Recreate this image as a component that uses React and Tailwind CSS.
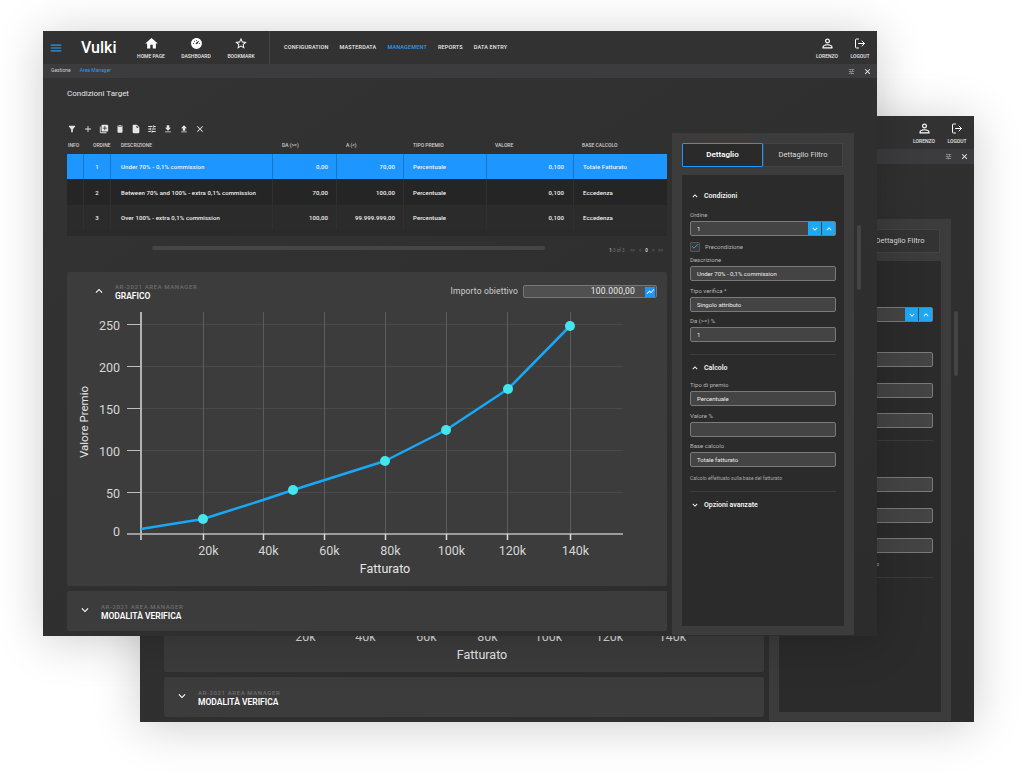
import {
  MdMenu, MdHome, MdStarBorder, MdFilterAlt, MdAdd, MdLibraryAdd, MdDelete, MdInsertDriveFile,
  MdTune, MdFileDownload, MdFileUpload, MdClose, MdPersonOutline, MdShowChart, MdKeyboardArrowUp,
  MdKeyboardArrowDown,
} from 'react-icons/md';
import { RiDashboard3Fill } from 'react-icons/ri';
import { LuLogOut, LuCheck } from 'react-icons/lu';

const NAV = ['CONFIGURATION', 'MASTERDATA', 'MANAGEMENT', 'REPORTS', 'DATA ENTRY'];

const ROWS = [
  { n: '1', desc: 'Under 70% - 0,1% commission', da: '0,00', a: '70,00', val: '0,100', base: 'Totale Fatturato', on: true },
  { n: '2', desc: 'Between 70% and 100% - extra 0,1% commission', da: '70,00', a: '100,00', val: '0,100', base: 'Eccedenza', bg: 'bg-[#252525]' },
  { n: '3', desc: 'Over 100% - extra 0,1% commission', da: '100,00', a: '99.999.999,00', val: '0,100', base: 'Eccedenza', bg: 'bg-[#2b2b2b]' },
];

const POINTS = [[203, 519], [293, 490], [385, 461], [446, 430], [508, 389], [570, 326]];
const Y_TICKS = [[324.5, '250'], [366.5, '200'], [408.5, '150'], [450.5, '100'], [492.5, '50']];
const X_TICKS = [[203.5, '20k'], [263.5, '40k'], [324.5, '60k'], [385.5, '80k'], [446.5, '100k'], [507.5, '120k'], [570.5, '140k']];

function TopIcon({ icon: Icon, label, size = 15 }) {
  return (
    <div className="flex w-[28px] flex-col items-center">
      <Icon size={size} className="h-[15px] text-white" />
      <span className="mt-[2px] text-[5px] leading-[7px] font-medium whitespace-nowrap text-[#e8e8e8]">{label}</span>
    </div>
  );
}

function Header() {
  return (
    <div className="flex h-[33px] shrink-0 items-center bg-[#323232]">
      <MdMenu size={14} className="ml-[6px] text-[#2f9bf0]" />
      <span className="ml-[18px] w-[56px] text-[16px] leading-none font-medium text-white">Vulki</span>
      <div className="flex gap-[17px]">
        <TopIcon icon={MdHome} label="HOME PAGE" />
        <TopIcon icon={RiDashboard3Fill} label="DASHBOARD" size={13} />
        <TopIcon icon={MdStarBorder} label="BOOKMARK" size={14} />
      </div>
      <div className="ml-[14px] h-full w-px bg-[#444]" />
      <div className="ml-[14px] flex gap-[11px] text-[5.5px] font-medium tracking-[0.15px] text-[#e8e8e8]">
        {NAV.map((n) => (
          <span key={n} className={n === 'MANAGEMENT' ? 'text-[#2f9bf0]' : ''}>{n}</span>
        ))}
      </div>
      <div className="mr-[3px] ml-auto flex gap-[5px]">
        <TopIcon icon={MdPersonOutline} label="LORENZO" />
        <TopIcon icon={LuLogOut} label="LOGOUT" size={12} />
      </div>
    </div>
  );
}

function Toolbar() {
  const icons = [MdFilterAlt, MdAdd, MdLibraryAdd, MdDelete, MdInsertDriveFile, MdTune, MdFileDownload, MdFileUpload, MdClose];
  return (
    <div className="mt-[24px] flex h-[10px] items-center gap-[6px] text-[#e6e6e6]">
      {icons.map((Icon, i) => (
        <Icon key={i} size={10} />
      ))}
    </div>
  );
}

function Table() {
  const head = 'text-[5px] font-medium text-[#d0d0d0] whitespace-nowrap';
  return (
    <div>
      <div className={`mt-[4px] flex h-[16px] items-center ${head}`}>
        <span className="w-[17px] pl-[1px]">INFO</span>
        <span className="w-[27px] pl-[9px]">ORDINE</span>
        <span className="w-[162px] pl-[10px]">DESCRIZIONE</span>
        <span className="w-[64px] pl-[9px]">DA (>=)</span>
        <span className="w-[67px] pl-[9px]">A (&lt;)</span>
        <span className="w-[83px] pl-[9px]">TIPO PREMIO</span>
        <span className="w-[87px] pl-[8px]">VALORE</span>
        <span className="w-[93px] pl-[8px]">BASE CALCOLO</span>
      </div>
      {ROWS.map((r) => {
        const line = r.on ? 'border-r border-[#1677c9]' : 'border-r border-[#303030]';
        return (
          <div
            key={r.n}
            className={`flex h-[25.4px] items-stretch text-[6px] font-medium tracking-[0.1px] text-[#f2f2f2] ${r.on ? 'bg-[#1e96ff]' : r.bg}`}
          >
            <span className={`w-[17px] ${line}`} />
            <span className={`flex w-[27px] items-center justify-center ${line}`}>{r.n}</span>
            <span className={`flex w-[162px] items-center pl-[10px] whitespace-nowrap ${line}`}>{r.desc}</span>
            <span className={`flex w-[64px] items-center justify-end pr-[8px] ${line}`}>{r.da}</span>
            <span className={`flex w-[67px] items-center justify-end pr-[8px] ${line}`}>{r.a}</span>
            <span className={`flex w-[83px] items-center pl-[9px] ${line}`}>Percentuale</span>
            <span className={`flex w-[87px] items-center justify-end pr-[9px] ${line}`}>{r.val}</span>
            <span className="flex w-[93px] items-center pl-[9px]">{r.base}</span>
          </div>
        );
      })}
      <div className="h-[6px] bg-[#2a2a2a]" />
      <div className="flex h-[36px] items-start">
        <div className="mt-[10px] ml-[85px] h-[4px] w-[393px] rounded-full bg-[#454545]" />
        <div className="mt-[12px] mr-[4px] ml-auto flex gap-[4px] text-[4.5px] whitespace-nowrap text-[#777]">
          <span className="mr-[2px]"><b className="text-[#aaa]">1</b>-3 of 3</span>
          <span>&lt;&lt;</span>
          <span>&lt;</span>
          <b className="text-[#ccc]">0</b>
          <span>&gt;</span>
          <span>&gt;&gt;</span>
        </div>
      </div>
    </div>
  );
}

function Chart() {
  const line = [[141, 529], POINTS[0], [263, 500], ...POINTS.slice(1)];
  return (
    <svg viewBox="67 306 600 280" className="block h-[280px] w-[600px]" style={{ fontFamily: 'Roboto, sans-serif' }}>
      {Y_TICKS.map(([y]) => (
        <line key={y} x1="141" x2="623" y1={y} y2={y} stroke="#4a4a4a" strokeWidth="1" />
      ))}
      {X_TICKS.map(([x]) => (
        <line key={x} x1={x} x2={x} y1="312" y2="534" stroke="#5e5a5a" strokeWidth="1" />
      ))}
      <line x1="141" x2="141" y1="312" y2="540" stroke="#d8d8d8" strokeWidth="1.5" />
      <line x1="127" x2="623" y1="534" y2="534" stroke="#bdbdbd" strokeWidth="1.5" />
      {Y_TICKS.map(([y]) => (
        <line key={y} x1="127" x2="141" y1={y} y2={y} stroke="#bdbdbd" strokeWidth="1" />
      ))}
      {X_TICKS.map(([x]) => (
        <line key={x} x1={x} x2={x} y1="534" y2="540" stroke="#d8d8d8" strokeWidth="1.5" />
      ))}
      {Y_TICKS.map(([y, t]) => (
        <text key={t} x="120" y={y + 5.5} textAnchor="end" fontSize="12.5" fill="#d6d6d6">{t}</text>
      ))}
      <text x="120" y="535.5" textAnchor="end" fontSize="12.5" fill="#d6d6d6">0</text>
      {X_TICKS.map(([x, t]) => (
        <text key={t} x={x + 5} y="555" textAnchor="middle" fontSize="12.5" fill="#d6d6d6">{t}</text>
      ))}
      <text x="385" y="573" textAnchor="middle" fontSize="12.5" fill="#e6e6e6">Fatturato</text>
      <text transform="translate(88 422) rotate(-90)" textAnchor="middle" fontSize="11.5" fill="#e6e6e6">Valore Premio</text>
      <polyline
        points={line.map((p) => p.join(',')).join(' ')}
        fill="none"
        stroke="#18a8f5"
        strokeWidth="2.5"
        strokeLinejoin="round"
      />
      {POINTS.map(([x, y]) => (
        <circle key={x} cx={x} cy={y} r="5" fill="#45e5ee" />
      ))}
    </svg>
  );
}

function CardTitle({ title, open }) {
  const Arrow = open ? MdKeyboardArrowUp : MdKeyboardArrowDown;
  return (
    <>
      <Arrow size={14} className="mb-[2px] text-white" />
      <div className="ml-[9px] flex flex-col pt-[1px]">
        <span className="text-[6px] leading-[8px] font-medium tracking-[0.6px] text-[#6e6e6e]">AR-2021 AREA MANAGER</span>
        <span className="text-[8.5px] leading-[10px] font-semibold text-white">{title}</span>
      </div>
    </>
  );
}

function Field({ label, value, spinner }) {
  return (
    <div>
      {label && <div className="h-[11px] text-[6px] leading-[10px] text-[#b4b4b4]">{label}</div>}
      <div className="flex h-[15px] items-center rounded-[2px] border border-[#7a7a7a] bg-[#444] pl-[6px] text-[6px] text-[#ededed]">
        {value}
        {spinner && (
          <div className="ml-auto flex h-full gap-px">
            <span className="flex w-[13px] items-center justify-center bg-[#1ea7f5] text-white"><MdKeyboardArrowDown size={10} /></span>
            <span className="flex w-[13px] items-center justify-center bg-[#1ea7f5] text-white"><MdKeyboardArrowUp size={10} /></span>
          </div>
        )}
      </div>
    </div>
  );
}

function SectionTitle({ title, open }) {
  const Arrow = open ? MdKeyboardArrowUp : MdKeyboardArrowDown;
  return (
    <div className="flex h-[12px] items-center gap-[4px] text-[7px] font-semibold text-[#f2f2f2]">
      <Arrow size={10} className="text-white" />
      {title}
    </div>
  );
}

function DetailPanel() {
  return (
    <div className="mt-[55px] ml-[5px] flex h-[502px] w-[182px] flex-col bg-[#3c3c3c] px-[10px] pt-[10px]">
      <div className="flex h-[24px] text-[7.5px]">
        <div className="flex w-[81px] items-center justify-center rounded-[1px] border border-[#1e96ff] bg-[#2a2a2a] text-[8px] font-semibold text-white">
          Dettaglio
        </div>
        <div className="flex w-[80px] items-center justify-center border border-[#444] bg-[#333] text-[#dcdcdc]">
          Dettaglio Filtro
        </div>
      </div>
      <div className="mt-[8px] h-[451px] bg-[#2b2b2b] px-[8px] pt-[15px]">
        <SectionTitle title="Condizioni" open />
        <div className="mt-[8px] w-[146px]">
          <Field label="Ordine" value="1" spinner />
          <div className="mt-[5px] flex h-[11px] items-center">
            <span className="flex h-[10px] w-[10px] items-center justify-center rounded-[1px] border border-[#555] bg-[#383838]">
              <LuCheck size={9} strokeWidth={3} className="text-[#1ea7f5]" />
            </span>
            <span className="ml-[5px] text-[6px] text-[#b4b4b4]">Precondizione</span>
          </div>
          <div className="mt-[3px] flex flex-col gap-[4.5px]">
            <Field label="Descrizione" value="Under 70% - 0,1% commission" />
            <Field label="Tipo verifica *" value="Singolo attributo" />
            <Field label="Da (>=) %" value="1" />
          </div>
          <div className="mt-[12px] h-px bg-[#3c3c3c]" />
        </div>
        <div className="mt-[7px]">
          <SectionTitle title="Calcolo" open />
        </div>
        <div className="mt-[6px] flex w-[146px] flex-col gap-[4.5px]">
          <Field label="Tipo di premio" value="Percentuale" />
          <Field label="Valore %" value="" />
          <Field label="Base calcolo" value="Totale fatturato" />
        </div>
        <div className="mt-[8px] w-[146px] text-[5px] leading-[7px] text-[#a8a8a8]">Calcolo effettuato sulla base del fatturato</div>
        <div className="mt-[9px] h-px w-[146px] bg-[#3c3c3c]" />
        <div className="mt-[7px]">
          <SectionTitle title="Opzioni avanzate" />
        </div>
      </div>
    </div>
  );
}

function Window({ back }) {
  return (
    <div
      className={`flex w-[834px] flex-col overflow-hidden bg-[#323232] shadow-[0_4px_45px_rgba(0,0,0,0.2)] ${back ? 'h-[606px]' : 'h-[605px]'}`}
      style={{ fontFamily: 'Roboto, sans-serif' }}
    >
      <Header />
      <div className={`flex shrink-0 items-center bg-[#3c3c3e] pl-[8px] text-[5px] text-[#cfcfcf] ${back ? 'h-[15px]' : 'h-[14px]'}`}>
        <span>Gestione</span>
        <span className="ml-[9px] text-[#2f9bf0]">Area Manager</span>
        <MdTune size={7} className="ml-auto text-[#cfcfcf]" />
        <MdClose size={9} className="mr-[5px] ml-[8px] text-white" />
      </div>
      <div className="flex min-h-0 flex-1 bg-gradient-to-br from-[#333333] to-[#2c2c2c]">
        <div className="ml-[24px] w-[600px] shrink-0">
          <div className="mt-[10px] text-[8px] leading-[12px] text-[#e6e6e6]">Condizioni Target</div>
          <Toolbar />
          <Table />
          <div className="h-[314px] rounded-[2px] bg-[#3c3c3c]">
            <div className="flex h-[34px] items-center pt-[5px] pl-[25px]">
              <CardTitle title="GRAFICO" open />
              <div className="mr-[10px] ml-auto flex items-center">
                <span className="text-[8.5px] tracking-[0.15px] text-[#d0d0d0]">Importo obiettivo</span>
                <div className="ml-[5px] flex h-[13px] w-[134px] items-center justify-end rounded-[2px] border border-[#767676] bg-[#505050] text-[8.5px] tracking-[0.2px] text-[#ececec]">
                  100.000,00
                  <span className="mr-px ml-[10px] flex h-[10px] w-[10px] items-center justify-center bg-[#1e96ff] text-white">
                    <MdShowChart size={9} />
                  </span>
                </div>
              </div>
            </div>
            <Chart />
          </div>
          <div className="mt-[5px] flex h-[40px] items-center rounded-[2px] bg-[#3c3c3c] pl-[11px]">
            <CardTitle title="MODALITÀ VERIFICA" />
          </div>
        </div>
        <DetailPanel />
        <div className="mt-[147px] ml-[3px] h-[65px] w-[4px] rounded-full bg-[#444]" />
      </div>
    </div>
  );
}

export default function App() {
  return (
    <div className="relative h-[780px] w-[1024px] overflow-hidden bg-white">
      <div className="absolute top-[116px] left-[140px]">
        <Window back />
      </div>
      <div className="absolute top-[31px] left-[43px]">
        <Window />
      </div>
    </div>
  );
}
